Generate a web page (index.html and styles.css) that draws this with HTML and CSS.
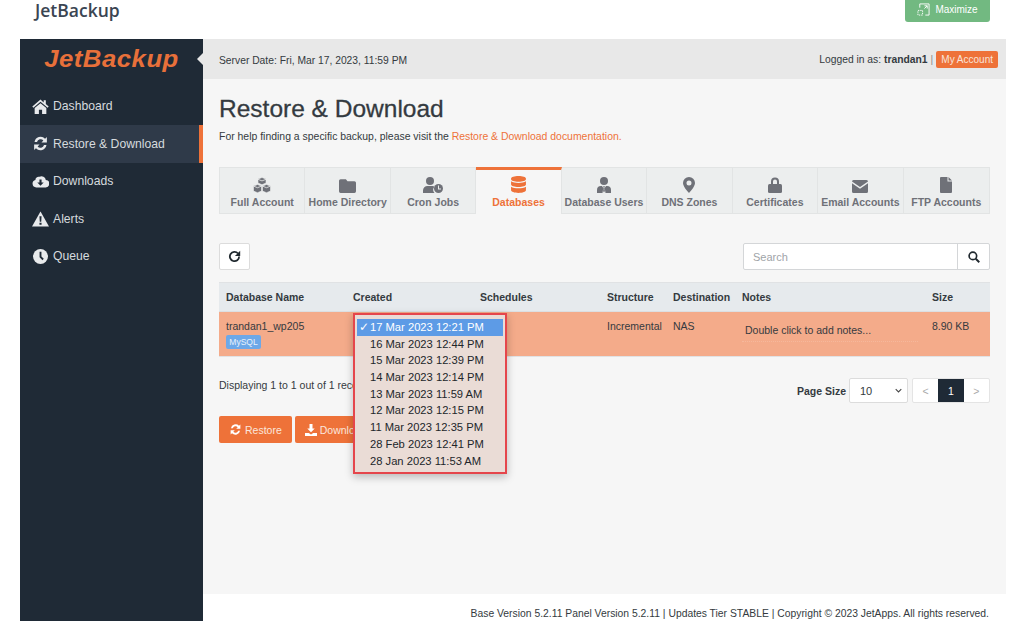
FILE: index.html
```html
<!DOCTYPE html>
<html lang="en">
<head>
    <meta charset="UTF-8">
    <title>JetBackup - Restore &amp; Download</title>
    <link rel="stylesheet" href="styles.css">
</head>
<body>
    <!-- Host panel header -->
    <header class="page-header">
        <h1 class="app-title">JetBackup</h1>
        <a class="maximize-btn">
            <svg class="maximize-icon" viewBox="0 0 14 14" width="13" height="13"><path d="M3 5V1h10v12H9M8 6l3-3M8 3h3v3" fill="none" stroke="#fff" stroke-width="1"/><path d="M1 8h5v5H1z" fill="none" stroke="#fff" stroke-width="1" stroke-dasharray="1.500 1"/></svg>
            Maximize
        </a>
    </header>

    <div class="panel">
        <!-- Sidebar -->
        <aside class="sidebar">
            <div class="logo">JetBackup</div>
            <nav class="side-nav">
                <a class="side-link">
                    <svg viewBox="0 0 16 14" width="17" height="15"><path d="M8 0.5L0.3 7l1 1.2L8 2.6l6.7 5.6 1-1.2-2.7-2.3V1h-2v2.2zM8 4L2.5 8.5V14h4v-4h3v4h4V8.5z" fill="#e8eaec"/></svg>
                    Dashboard
                </a>
                <a class="side-link active">
                    <svg viewBox="0 0 16 16" width="17" height="17"><path d="M2.400 6.600A5.800 5.800 0 0 1 12.300 3.500L14 1.800V7H8.900l1.800-1.800A3.500 3.500 0 0 0 4.700 6.600zM13.600 9.400A5.800 5.800 0 0 1 3.700 12.500L2 14.200V9h5.100l-1.800 1.800A3.500 3.500 0 0 0 11.300 9.400z" fill="#e8eaec"/></svg>
                    Restore &amp; Download
                </a>
                <a class="side-link">
                    <svg viewBox="0 0 16 13" width="17" height="14"><path d="M4 12.500A3.500 3.500 0 0 1 3.200 5.600 3 3 0 0 1 7 2.600 4 4 0 0 1 13 5.500 3.500 3.500 0 0 1 12.500 12.500z" fill="#e8eaec"/><path d="M7 5h2v3h2l-3 3-3-3h2z" fill="#1f2a36"/></svg>
                    Downloads
                </a>
                <a class="side-link">
                    <svg viewBox="0 0 16 15" width="17" height="16"><path d="M8 0.500L16 14.500H0z" fill="#e8eaec"/><path d="M7 5h2l-.3 5H7.300zM7 11h2v2H7z" fill="#1f2a36"/></svg>
                    Alerts
                </a>
                <a class="side-link">
                    <svg viewBox="0 0 16 16" width="15" height="15"><circle cx="8" cy="8" r="8" fill="#e8eaec"/><path d="M7 3h2v5l2.500 2.500-1.400 1.400L7 8.800z" fill="#1f2a36"/></svg>
                    Queue
                </a>
            </nav>
        </aside>

        <div class="main">
            <div class="topbar">
                <span class="server-date">Server Date: Fri, Mar 17, 2023, 11:59 PM</span>
                <div class="user-box">
                    Logged in as: <b>trandan1</b> <span class="sep">|</span>
                    <a class="account-btn">My Account</a>
                </div>
            </div>

            <div class="content">
                <h2 class="page-title">Restore &amp; Download</h2>
                <p class="help-text">For help finding a specific backup, please visit the <a class="link">Restore &amp; Download documentation.</a></p>

                <!-- Backup type tabs -->
                <div class="tabs">
                    <a class="tab">
                        <svg viewBox="0 0 18 16" width="18" height="16"><path d="M9 .5l4 1.600v4L9 7.700 5 6.100v-4zM4.500 7.500l4 1.600v5l-4 1.600-4-1.600v-5zM13.500 7.500l4 1.600v5l-4 1.600-4-1.600v-5z" fill="#6f7178" stroke="#eceeee" stroke-width=".6"/><path d="M5 2.300l4 1.600 4-1.600M.5 9.100l4 1.600 4-1.600M9.500 9.100l4 1.600 4-1.600" fill="none" stroke="#eceeee" stroke-width=".8"/></svg>
                        Full Account
                    </a>
                    <a class="tab">
                        <svg viewBox="0 0 16 14" width="17" height="15"><path d="M1.500 1h5l1.500 2h6.500A1.500 1.500 0 0 1 16 4.500v8a1.500 1.500 0 0 1-1.500 1.500h-13A1.500 1.500 0 0 1 0 12.500v-10A1.500 1.500 0 0 1 1.500 1z" fill="#6f7178"/></svg>
                        Home Directory
                    </a>
                    <a class="tab">
                        <svg viewBox="0 0 20 16" width="20" height="16"><circle cx="7" cy="4" r="4" fill="#6f7178"/><path d="M0 16v-2.500A4.500 4.500 0 0 1 4.500 9h5a4.500 4.500 0 0 1 2 .5A5 5 0 0 0 11.500 16z" fill="#6f7178"/><circle cx="15.500" cy="11.500" r="4.500" fill="#6f7178"/><path d="M15 8.500h1v3h2v1h-3z" fill="#eceeee"/></svg>
                        Cron Jobs
                    </a>
                    <a class="tab tab-active">
                        <svg viewBox="0 0 14 16" width="15" height="17"><path d="M7 0c3.900 0 7 1 7 2.300v.7c0 1.300-3.100 2.300-7 2.300S0 4.300 0 3v-.7C0 1 3.100 0 7 0zM0 5c1.500 1 4.200 1.500 7 1.500S12.500 6 14 5v3c0 1.300-3.100 2.300-7 2.300S0 9.300 0 8zM0 10c1.500 1 4.200 1.500 7 1.500s5.500-.5 7-1.500v3.500c0 1.300-3.100 2.500-7 2.500s-7-1.200-7-2.500z" fill="#ee7239"/></svg>
                        Databases
                    </a>
                    <a class="tab">
                        <svg viewBox="0 0 14 16" width="14" height="16"><circle cx="7" cy="4" r="4" fill="#6f7178"/><path d="M0 16v-3a4 4 0 0 1 4-4h1l1.300 2-.8 5zM14 16v-3a4 4 0 0 0-4-4H9l-1.300 2 .8 5zM6.300 9h1.400l-.3 1.500.5 3.500-.9 1.500-.9-1.500.5-3.500z" fill="#6f7178"/></svg>
                        Database Users
                    </a>
                    <a class="tab">
                        <svg viewBox="0 0 12 16" width="12" height="16"><path fill-rule="evenodd" d="M6 0a6 6 0 0 1 6 6c0 3-4 8-6 10C4 14 0 9 0 6a6 6 0 0 1 6-6zm0 3.500a2.500 2.500 0 1 0 0 5 2.500 2.500 0 0 0 0-5z" fill="#6f7178"/></svg>
                        DNS Zones
                    </a>
                    <a class="tab">
                        <svg viewBox="0 0 14 16" width="14" height="16"><path d="M3 7V4.500a4 4 0 0 1 8 0V7H9V4.500a2 2 0 0 0-4 0V7z" fill="#6f7178"/><rect y="7" width="14" height="9" rx="1.500" fill="#6f7178"/></svg>
                        Certificates
                    </a>
                    <a class="tab">
                        <svg viewBox="0 0 16 13" width="16" height="13"><path d="M1.500 0h13A1.500 1.500 0 0 1 16 1.500L8 7 0 1.500A1.500 1.500 0 0 1 1.500 0zM0 3.300L8 8.800l8-5.500v8.200a1.500 1.500 0 0 1-1.500 1.500h-13A1.500 1.500 0 0 1 0 11.500z" fill="#6f7178"/></svg>
                        Email Accounts
                    </a>
                    <a class="tab">
                        <svg viewBox="0 0 12 16" width="12" height="16"><path d="M1 0h6.500v4.500H12V15a1 1 0 0 1-1 1H1a1 1 0 0 1-1-1V1a1 1 0 0 1 1-1zM8.500 0L12 3.500H8.500z" fill="#6f7178"/></svg>
                        FTP Accounts
                    </a>
                </div>

                <div class="toolbar">
                    <button class="icon-btn">
                        <svg viewBox="0 0 16 16" width="13" height="13"><path d="M12.300 4.300A5.700 5.700 0 1 0 13.700 8" fill="none" stroke="#20292f" stroke-width="2.200"/><path d="M15 1v6.500H8.500z" fill="#20292f"/></svg>
                    </button>
                    <div class="search">
                        <span class="search-input">Search</span>
                        <span class="search-btn">
                            <svg viewBox="0 0 16 16" width="12" height="12"><circle cx="6.500" cy="6.500" r="5" fill="none" stroke="#20292f" stroke-width="2.200"/><path d="M10.300 10.300L15 15" stroke="#20292f" stroke-width="2.600"/></svg>
                        </span>
                    </div>
                </div>

                <!-- Backups table -->
                <div class="table">
                    <div class="table-row table-head">
                        <div class="col col-name">Database Name</div>
                        <div class="col col-created">Created</div>
                        <div class="col col-schedules">Schedules</div>
                        <div class="col col-structure">Structure</div>
                        <div class="col col-dest">Destination</div>
                        <div class="col col-notes">Notes</div>
                        <div class="col col-size">Size</div>
                    </div>
                    <div class="table-row table-body">
                        <div class="col col-name">
                            trandan1_wp205
                            <span class="badge">MySQL</span>
                        </div>
                        <div class="col col-created">
                            <ul class="date-menu">
                                <li class="date-item selected">17 Mar 2023 12:21 PM</li>
                                <li class="date-item">16 Mar 2023 12:44 PM</li>
                                <li class="date-item">15 Mar 2023 12:39 PM</li>
                                <li class="date-item">14 Mar 2023 12:14 PM</li>
                                <li class="date-item">13 Mar 2023 11:59 AM</li>
                                <li class="date-item">12 Mar 2023 12:15 PM</li>
                                <li class="date-item">11 Mar 2023 12:35 PM</li>
                                <li class="date-item">28 Feb 2023 12:41 PM</li>
                                <li class="date-item">28 Jan 2023 11:53 AM</li>
                            </ul>
                        </div>
                        <div class="col col-schedules"></div>
                        <div class="col col-structure">Incremental</div>
                        <div class="col col-dest">NAS</div>
                        <div class="col col-notes"><span class="notes-text">Double click to add notes...</span></div>
                        <div class="col col-size">8.90 KB</div>
                    </div>
                </div>

                <div class="table-footer">
                    <span class="records">Displaying 1 to 1 out of 1 records</span>
                    <div class="paging">
                        <b class="page-size-label">Page Size</b>
                        <span class="page-size">10
                            <svg viewBox="0 0 10 6" width="7" height="5"><path d="M1 1l4 4 4-4" fill="none" stroke="#444" stroke-width="1.500"/></svg>
                        </span>
                        <div class="pager">
                            <span class="page-link">&lt;</span>
                            <span class="page-link current">1</span>
                            <span class="page-link">&gt;</span>
                        </div>
                    </div>
                </div>

                <div class="actions">
                    <a class="action-btn">
                        <svg viewBox="0 0 16 16" width="13" height="13"><path d="M2.400 6.600A5.800 5.800 0 0 1 12.300 3.500L14 1.800V7H8.900l1.800-1.800A3.500 3.500 0 0 0 4.700 6.600zM13.600 9.400A5.800 5.800 0 0 1 3.700 12.500L2 14.200V9h5.100l-1.800 1.800A3.500 3.500 0 0 0 11.300 9.400z" fill="#fff"/></svg>
                        Restore
                    </a>
                    <a class="action-btn">
                        <svg viewBox="0 0 16 16" width="12" height="12"><path d="M6 0h4v6h3l-5 5-5-5h3zM0 12h5l3 2 3-2h5v4H0z" fill="#fff"/></svg>
                        Download
                    </a>
                </div>
            </div>

            <footer class="footer">Base Version 5.2.11 Panel Version 5.2.11 | Updates Tier STABLE | Copyright © 2023 JetApps. All rights reserved.</footer>
        </div>
    </div>
</body>
</html>
```

FILE: styles.css
```css
html, body {
    height: 621px;
    overflow: hidden;
}
body {
    margin: 0;
    background: #fff;
    font-family: "Liberation Sans", Arial, sans-serif;
    font-size: 11px;
    color: #343a40;
}
.page-header {
    height: 39px;
    display: flex;
    justify-content: space-between;
    align-items: flex-start;
    padding: 0 34px 0 35px;
}
.app-title {
    margin: 0;
    font-family: "Open Sans", sans-serif;
    font-size: 17.5px;
    line-height: 20px;
    font-weight: 600;
    color: #3a4552;
}
.maximize-btn {
    width: 85px;
    height: 22px;
    box-sizing: border-box;
    padding-bottom: 3px;
    display: flex;
    align-items: center;
    justify-content: center;
    gap: 5px;
    background: #72b981;
    color: #fff;
    border-radius: 0 0 3px 3px;
    font-size: 10px;
}
.panel {
    margin-left: 20px;
    width: 986px;
    height: 582px;
    display: flex;
}
.sidebar {
    width: 183px;
    flex-shrink: 0;
    background: #1f2a36;
}
.logo {
    height: 40px;
    text-align: center;
    font-size: 24px;
    line-height: 39px;
    font-weight: bold;
    font-style: italic;
    color: #e8703a;
    letter-spacing: 0.5px;
    transform: scaleX(1.07);
}
.side-nav {
    margin-top: 8.5px;
}
.side-link {
    height: 37.5px;
    display: flex;
    align-items: center;
    gap: 4px;
    padding-left: 12px;
    color: #d6dade;
    font-size: 12.2px;
}
.side-link svg {
    width: 17px;
}
.side-link.active {
    background: #2f3a49;
    border-right: 4px solid #ee7239;
}
.main {
    flex: 1;
    min-width: 0;
    display: flex;
    flex-direction: column;
    background: #f6f6f6;
    position: relative;
}
.main::before {
    content: "";
    position: absolute;
    left: -6px;
    top: 14px;
    border: 6px solid transparent;
    border-left: 0;
    border-right-color: #e8e8e8;
}
.topbar {
    height: 40px;
    flex-shrink: 0;
    display: flex;
    justify-content: space-between;
    align-items: center;
    padding: 0 8px 0 16px;
    background: #e8e8e8;
    font-size: 10.3px;
}
.server-date {
    padding-top: 2px;
}
.user-box {
    display: flex;
    align-items: center;
    gap: 3px;
}
.sep {
    color: #888;
}
.account-btn {
    padding: 3px 5px;
    background: #ee7239;
    color: #f8e4da;
    border-radius: 2px;
    font-size: 10px;
}
.content {
    flex: 1;
    padding: 0 16px;
}
.page-title {
    margin: 16px 0 0;
    font-size: 24.5px;
    line-height: 28px;
    font-weight: normal;
    -webkit-text-stroke: 0.3px #343a40;
    color: #343a40;
}
.help-text {
    margin: 7px 0 0;
    font-size: 10.45px;
    line-height: 14px;
}
.link {
    color: #ee7239;
}
.tabs {
    margin-top: 23px;
    height: 47px;
    box-sizing: border-box;
    display: grid;
    grid-template-columns: repeat(9, 1fr);
    border: 1px solid #e2e4e4;
    background: #eceeee;
}
.tab {
    display: flex;
    flex-direction: column;
    align-items: center;
    justify-content: flex-end;
    gap: 3px;
    padding-bottom: 5px;
    border-right: 1px solid #e2e4e4;
    color: #6f7178;
    font-size: 10.5px;
    font-weight: bold;
    white-space: nowrap;
    box-sizing: border-box;
}
.tab:last-child {
    border-right: 0;
}
.tab-active {
    margin-top: -1px;
    border-top: 3px solid #ee7239;
    margin-bottom: -1px;
    background: #f6f6f6;
    color: #ee7239;
    padding-bottom: 6px;
}
.toolbar {
    margin-top: 29px;
    height: 27px;
    display: flex;
    justify-content: space-between;
}
.icon-btn {
    width: 31px;
    height: 27px;
    padding: 0;
    display: flex;
    align-items: center;
    justify-content: center;
    background: #fff;
    border: 1px solid #dcdcdc;
    border-radius: 2px;
}
.search {
    width: 247px;
    display: flex;
    box-sizing: border-box;
    background: #fff;
    border: 1px solid #d4d6d8;
    border-radius: 2px;
}
.search-input {
    flex: 1;
    padding-left: 9px;
    line-height: 26px;
    color: #a0a4a8;
    font-size: 11px;
}
.search-btn {
    width: 31px;
    display: flex;
    align-items: center;
    justify-content: center;
    border-left: 1px solid #d4d6d8;
}
.table {
    margin-top: 12px;
    border: 1px solid #e0e2e4;
    border-width: 1px 0;
    font-size: 10.5px;
}
.table-row {
    display: flex;
}
.table-head {
    height: 28px;
    align-items: center;
    background: #e6eaed;
    font-weight: bold;
    border-bottom: 1px solid #dcdfe2;
}
.table-body {
    height: 44px;
    padding-top: 8px;
    box-sizing: border-box;
    background: #f4ab8a;
}
.col {
    box-sizing: border-box;
    padding-left: 7px;
    flex-shrink: 0;
}
.col-name { width: 127px; }
.col-created { width: 127px; position: relative; }
.col-schedules { width: 127px; }
.col-structure { width: 66px; }
.col-dest { width: 69px; }
.col-notes { width: 190px; }
.col-size { width: 58px; }
.badge {
    display: block;
    width: 29px;
    margin-top: 3px;
    padding: 1px 3px;
    background: #6da8e8;
    color: #e8f2fb;
    border-radius: 2px;
    font-size: 8.5px;
    line-height: 12px;
    text-align: center;
}
.notes-text {
    display: block;
    width: 176px;
    padding: 4px 2px 5px 3px;
    box-sizing: border-box;
    border-bottom: 1px dotted #f6b89c;
}
/* open native-looking dropdown sits over the table and the buttons */
.date-menu {
    position: absolute;
    left: 7px;
    top: -7px;
    z-index: 2;
    width: 154px;
    box-sizing: border-box;
    margin: 0;
    padding: 4px 2px 3px;
    list-style: none;
    background: #eadcd6;
    border: 2px solid #e5464c;
    box-shadow: 0 3px 8px rgba(0, 0, 0, 0.25);
    font-size: 11.2px;
    color: #22262a;
}
.date-item {
    height: 16.7px;
    line-height: 17.5px;
    padding-left: 13px;
    white-space: nowrap;
}
.date-item.selected {
    background: #5d9be6;
    color: #fff;
    position: relative;
}
.date-item.selected::before {
    content: "✓";
    position: absolute;
    left: 2px;
    font-family: "DejaVu Sans", sans-serif;
    font-size: 12px;
}
.table-footer {
    margin-top: 21px;
    height: 25px;
    display: flex;
    justify-content: space-between;
    align-items: center;
    font-size: 10.5px;
}
.records {
    margin-top: -11px;
}
.paging {
    display: flex;
    align-items: center;
}
.page-size-label {
    margin-right: 3px;
}
.page-size {
    width: 59px;
    height: 25px;
    box-sizing: border-box;
    padding: 0 5px 0 10px;
    display: flex;
    justify-content: space-between;
    align-items: center;
    background: #fff;
    border: 1px solid #dcdcdc;
    border-radius: 2px;
    font-size: 11px;
}
.pager {
    margin-left: 4px;
    display: flex;
    background: #fff;
    border: 1px solid #e4e4e4;
    border-radius: 2px;
    height: 25px;
    width: 78px;
    box-sizing: border-box;
}
.page-link {
    flex: 1;
    display: flex;
    align-items: center;
    justify-content: center;
    color: #aaa;
}
.page-link.current {
    background: #1f2a36;
    color: #fff;
}
.actions {
    margin-top: 13px;
    display: flex;
    gap: 3px;
}
.action-btn {
    height: 27px;
    padding: 0 10px;
    display: flex;
    align-items: center;
    gap: 3px;
    background: #ee7239;
    color: #fbe6dc;
    border-radius: 2px;
    font-size: 10.5px;
}
.footer {
    height: 27px;
    flex-shrink: 0;
    background: #fff;
    text-align: right;
    padding: 14px 17px 0 0;
    box-sizing: border-box;
    font-size: 10.35px;
    white-space: nowrap;
}
```
